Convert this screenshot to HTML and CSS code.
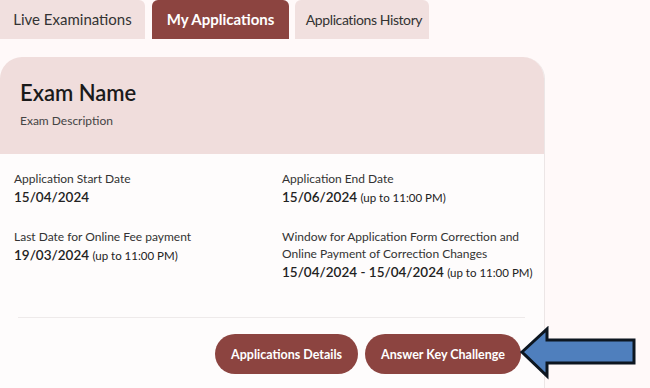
FILE: index.html
```html
<!DOCTYPE html>
<html>
<head>
    <title>My Applications</title>
    <link rel="stylesheet" href="styles.css">
</head>
<body>
    <div class="tabs">
        <div class="tab">Live Examinations</div>
        <div class="tab active">My Applications</div>
        <div class="tab">Applications History</div>
    </div>

    <div class="main">
        <div class="card">
            <div class="card-head">
                <h2>Exam Name</h2>
                <p>Exam Description</p>
            </div>
            <div class="card-body">
                <div class="dates">
                    <div class="item">
                        <div class="label">Application Start Date</div>
                        <div class="value">15/04/2024</div>
                    </div>
                    <div class="item">
                        <div class="label">Application End Date</div>
                        <div class="value">15/06/2024 <span>(up to 11:00 PM)</span></div>
                    </div>
                    <div class="item">
                        <div class="label">Last Date for Online Fee payment</div>
                        <div class="value">19/03/2024 <span>(up to 11:00 PM)</span></div>
                    </div>
                    <div class="item">
                        <div class="label">Window for Application Form Correction and Online Payment of Correction Changes</div>
                        <div class="value">15/04/2024 - 15/04/2024 <span>(up to 11:00 PM)</span></div>
                    </div>
                </div>
                <div class="divider"></div>
                <div class="actions">
                    <button class="btn">Applications Details</button>
                    <button class="btn">Answer Key Challenge</button>
                </div>
            </div>
        </div>
        <div class="pointer">
            <svg width="120" height="56" viewBox="0 0 120 56">
                <polygon points="2,26 27,3 27,14 114,14 114,37 27,37 27,50" fill="#4f7fbd" stroke="#0d1620" stroke-width="3" stroke-linejoin="miter"/>
            </svg>
        </div>
    </div>
</body>
</html>
```

FILE: styles.css
```css
body {
    margin: 0;
    background: #fff9f9;
    font-family: Lato, "Noto Sans", sans-serif;
    color: #222;
    width: 650px;
    height: 388px;
    overflow: hidden;
}
.tabs {
    display: flex;
    gap: 6px;
}
.tab {
    background: #f1e0df;
    color: #333;
    font-size: 15px;
    height: 39px;
    line-height: 39px;
    text-align: center;
    white-space: nowrap;
    border-radius: 6px 6px 0 0;
    box-sizing: border-box;
}
.tab:nth-child(1) {
    width: 145px;
    border-top-left-radius: 0;
}
.tab:nth-child(2) {
    width: 137px;
    margin-left: 1px;
}
.tab:nth-child(3) {
    width: 134px;
    font-size: 14px;
    letter-spacing: -0.4px;
    padding-left: 4px;
}
.tab.active {
    background: #8c4440;
    color: #fff;
    font-weight: bold;
}
.main {
    display: flex;
    margin-top: 18px;
}
.card {
    width: 545px;
    flex-shrink: 0;
    border-radius: 22px 22px 0 0;
    overflow: hidden;
    background: #fefcfc;
    border-right: 1px solid #ece6e6;
    box-sizing: border-box;
    height: 340px;
}
.card-head {
    background: #f0dddc;
    padding: 22px 20px 0;
    height: 75px;
}
.card-head h2 {
    margin: 0;
    font-size: 22px;
    font-weight: 600;
    color: #1a1a1a;
}
.card-head p {
    margin: 7px 0 0;
    font-size: 12px;
    color: #444;
}
.card-body {
    padding: 16px 0 0 14px;
}
.dates {
    display: grid;
    grid-template-columns: 268px 258px;
    row-gap: 23px;
}
.label {
    font-size: 12px;
    color: #333;
    line-height: 17px;
}
.value {
    font-size: 13.5px;
    font-weight: 600;
    color: #222;
    margin-top: 2px;
}
.value span {
    font-size: 11.5px;
    font-weight: normal;
}
.divider {
    border-top: 1px solid #eeeaea;
    margin: 37px 19px 0 4px;
}
.actions {
    display: flex;
    justify-content: flex-end;
    gap: 7px;
    padding: 16px 23px 0 0;
}
.btn {
    background: #8c4440;
    color: #fff;
    border: none;
    border-radius: 20px;
    height: 40px;
    padding: 0 16px;
    font-family: Lato, "Noto Sans", sans-serif;
    font-size: 12.5px;
    font-weight: bold;
}
.pointer {
    margin-top: 269px;
    margin-left: -25px;
}
```
